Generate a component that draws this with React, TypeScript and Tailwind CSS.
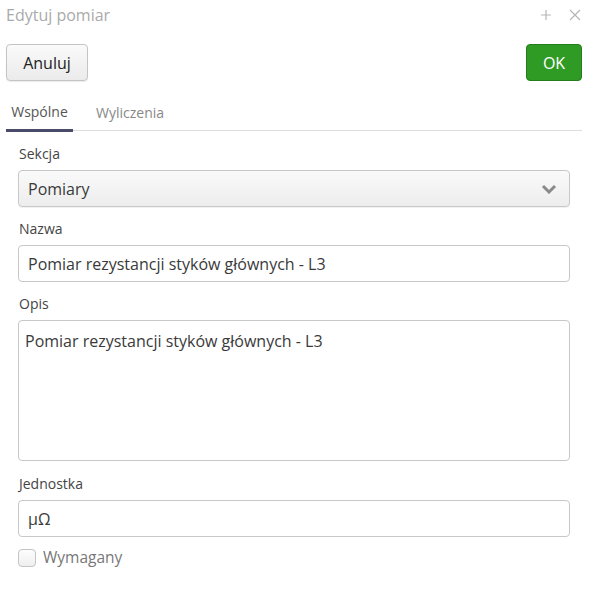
import React from 'react'

export default function App() {
  return (
    <div className="w-[591px] h-[589px] bg-white text-[#3a3a3a] overflow-hidden" style={{ fontFamily: '"Open Sans", sans-serif' }}>
      {/* nagłówek okna */}
      <div className="flex items-center h-[30px] pl-[6px] pr-[10px]">
        <span className="text-[16px] text-[#aaa] flex-1">Edytuj pomiar</span>
        <svg width="12" height="12" viewBox="0 0 12 12" className="mr-[17px]" stroke="#b5b5b5" strokeWidth="1.2">
          <path d="M6 1v10M1 6h10" />
        </svg>
        <svg width="12" height="12" viewBox="0 0 12 12" stroke="#b5b5b5" strokeWidth="1.2">
          <path d="M1 1l10 10M11 1L1 11" />
        </svg>
      </div>

      <div className="flex justify-between pl-[6px] pr-[9px] mt-[14px]">
        <button className="w-[82px] h-[37px] rounded-[4px] border border-[#c4c4c4] bg-gradient-to-b from-[#fafafa] to-[#ebebeb] text-[16px] text-[#222] shadow-[0_1px_1px_rgba(0,0,0,0.08)]">
          Anuluj
        </button>
        <button className="w-[56px] h-[37px] rounded-[4px] border border-[#237d1a] bg-[#2f9a24] text-[16px] text-white">
          OK
        </button>
      </div>

      {/* zakładki */}
      <div className="ml-[6px] mr-[9px] mt-[13px] flex border-b border-[#ddd] h-[37px]">
        <div className="w-[67px] flex justify-center items-center border-b-[3px] border-[#4a4b68] -mb-[2px] text-[14px] text-[#555]">
          Wspólne
        </div>
        <div className="ml-[23px] flex items-center text-[14px] text-[#888]">Wyliczenia</div>
      </div>

      <div className="pl-[18px] pr-[21px] pt-[13px] flex flex-col">
        <label className="text-[14px] text-[#444] leading-[19px] pl-[1px]">Sekcja</label>
        <div className="mt-[7px] h-[37px] rounded-[4px] border border-[#c8c8c8] bg-gradient-to-b from-[#fafafa] to-[#ededed] flex items-center pl-[9px] pr-[12px] shadow-[0_1px_1px_rgba(0,0,0,0.06)]">
          <span className="flex-1 text-[16px]">Pomiary</span>
          <svg width="16" height="10" viewBox="0 0 16 10" fill="none" stroke="#8a8a8a" strokeWidth="3">
            <path d="M2 2l6 6 6-6" />
          </svg>
        </div>

        <label className="mt-[12px] text-[14px] text-[#444] leading-[19px] pl-[1px]">Nazwa</label>
        <div className="mt-[7px] h-[37px] rounded-[4px] border border-[#c8c8c8] flex items-center pl-[9px] text-[16px]">
          Pomiar rezystancji styków głównych - L3
        </div>

        <label className="mt-[12px] text-[14px] text-[#444] leading-[19px] pl-[1px]">Opis</label>
        <div className="mt-[7px] h-[141px] rounded-[4px] border border-[#c8c8c8] pl-[6px] pt-[8px] text-[16px]">
          Pomiar rezystancji styków głównych - L3
        </div>

        <label className="mt-[13px] text-[14px] text-[#444] leading-[19px] pl-[1px]">Jednostka</label>
        <div className="mt-[7px] h-[37px] rounded-[4px] border border-[#c8c8c8] flex items-center pl-[9px] text-[16px]">
          μΩ
        </div>

        <div className="mt-[9px] flex items-center">
          <span className="w-[18px] h-[18px] rounded-[4px] border border-[#c4c4c4] bg-gradient-to-b from-[#fdfdfd] to-[#efefef]" />
          <span className="ml-[7px] text-[15.5px] text-[#777]">Wymagany</span>
        </div>
      </div>
    </div>
  )
}
